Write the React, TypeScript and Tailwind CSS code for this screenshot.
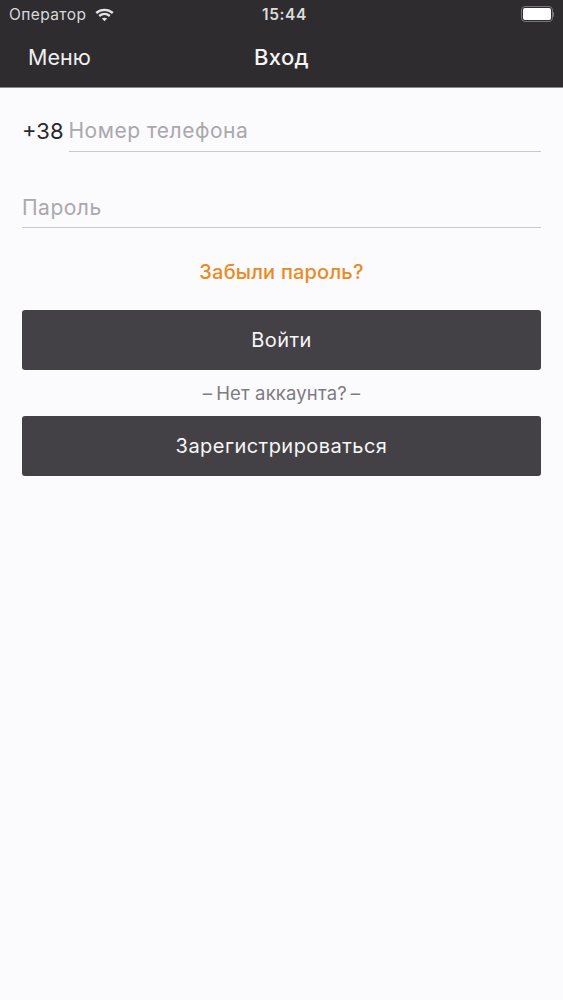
function WifiIcon() {
  return (
    <svg width="19" height="14" viewBox="0 0 19 14" fill="none" stroke="#e4e4e4" strokeWidth="2.4" aria-hidden="true">
      <path d="M1.2 5 C6 0.8 13 0.8 17.8 5" />
      <path d="M4.2 8 C7.4 5.3 11.6 5.3 14.8 8" />
      <path d="M9.5 13.2 L6.9 10.6 C8.4 9.5 10.6 9.5 12.1 10.6 Z" fill="#e4e4e4" stroke="none" />
    </svg>
  );
}

function BatteryIcon() {
  return (
    <div className="flex items-center mb-[2px]">
      <div className="w-[32px] h-[16px] rounded-[4px] border-[1.5px] border-[#77767a] p-[1px]">
        <div className="w-full h-full rounded-[2px] bg-white" />
      </div>
      <div className="w-[1.5px] h-[5px] rounded-r-sm bg-[#77767a]" />
    </div>
  );
}

function Field({ placeholder, className }: { placeholder: string; className: string }) {
  return (
    <div className={`border-b border-[#c9c8cb] text-[21px] tracking-[0.5px] text-[#a9a9ac] ${className}`}>
      {placeholder}
    </div>
  );
}

function ActionButton({ label }: { label: string }) {
  return (
    <button
      type="button"
      className="w-full h-[60px] rounded-[3px] bg-[#434145] text-[20px] tracking-[0.46px] text-[#f7f6f8]"
    >
      {label}
    </button>
  );
}

export default function App() {
  return (
    <div className="w-[563px] h-[1000px] bg-[#fbfafd] font-['Inter',sans-serif] overflow-hidden">
      <header className="h-[88px] bg-[#2e2c2f] border-b border-[#8a898c]">
        <div className="h-[30px] grid grid-cols-3 items-center pl-[9px] pr-[9px]">
          <div className="flex items-center gap-[9px]">
            <span className="text-[15.5px] tracking-[0.4px] text-[#d9d9da]">Оператор</span>
            <WifiIcon />
          </div>
          <span className="pl-[6px] text-center text-[15.5px] font-semibold tracking-[0.6px] text-[#dcdcdc]">15:44</span>
          <div className="flex justify-end">
            <BatteryIcon />
          </div>
        </div>
        <div className="h-[56px] grid grid-cols-3 items-center pl-[28px] pr-[28px] pb-[2px]">
          <span className="text-[21.5px] text-[#efeff0]">Меню</span>
          <span className="text-center text-[22px] font-medium tracking-[0.3px] text-[#f4f4f5]">Вход</span>
        </div>
      </header>
      <main className="px-[22px] pt-[29px]">
        <div className="flex items-start gap-[5px]">
          <span className="text-[22px] leading-[28px] text-[#2b2a2d]">+38</span>
          <Field placeholder="Номер телефона" className="flex-1 h-[35px] leading-[28px]" />
        </div>
        <Field placeholder="Пароль" className="mt-[41px] h-[35px] leading-[30px]" />
        <div className="mt-[31px] text-center text-[20px] leading-[26px] font-medium tracking-[0.2px] text-[#ea8a1f]">
          Забыли пароль?
        </div>
        <div className="mt-[25px]">
          <ActionButton label="Войти" />
        </div>
        <div className="h-[46px] pt-[1px] flex items-center justify-center gap-[4px] text-[18.5px] tracking-[0.15px] text-[#7d7c80]">
          <span>–</span>
          <span>Нет аккаунта?</span>
          <span>–</span>
        </div>
        <ActionButton label="Зарегистрироваться" />
      </main>
    </div>
  );
}
